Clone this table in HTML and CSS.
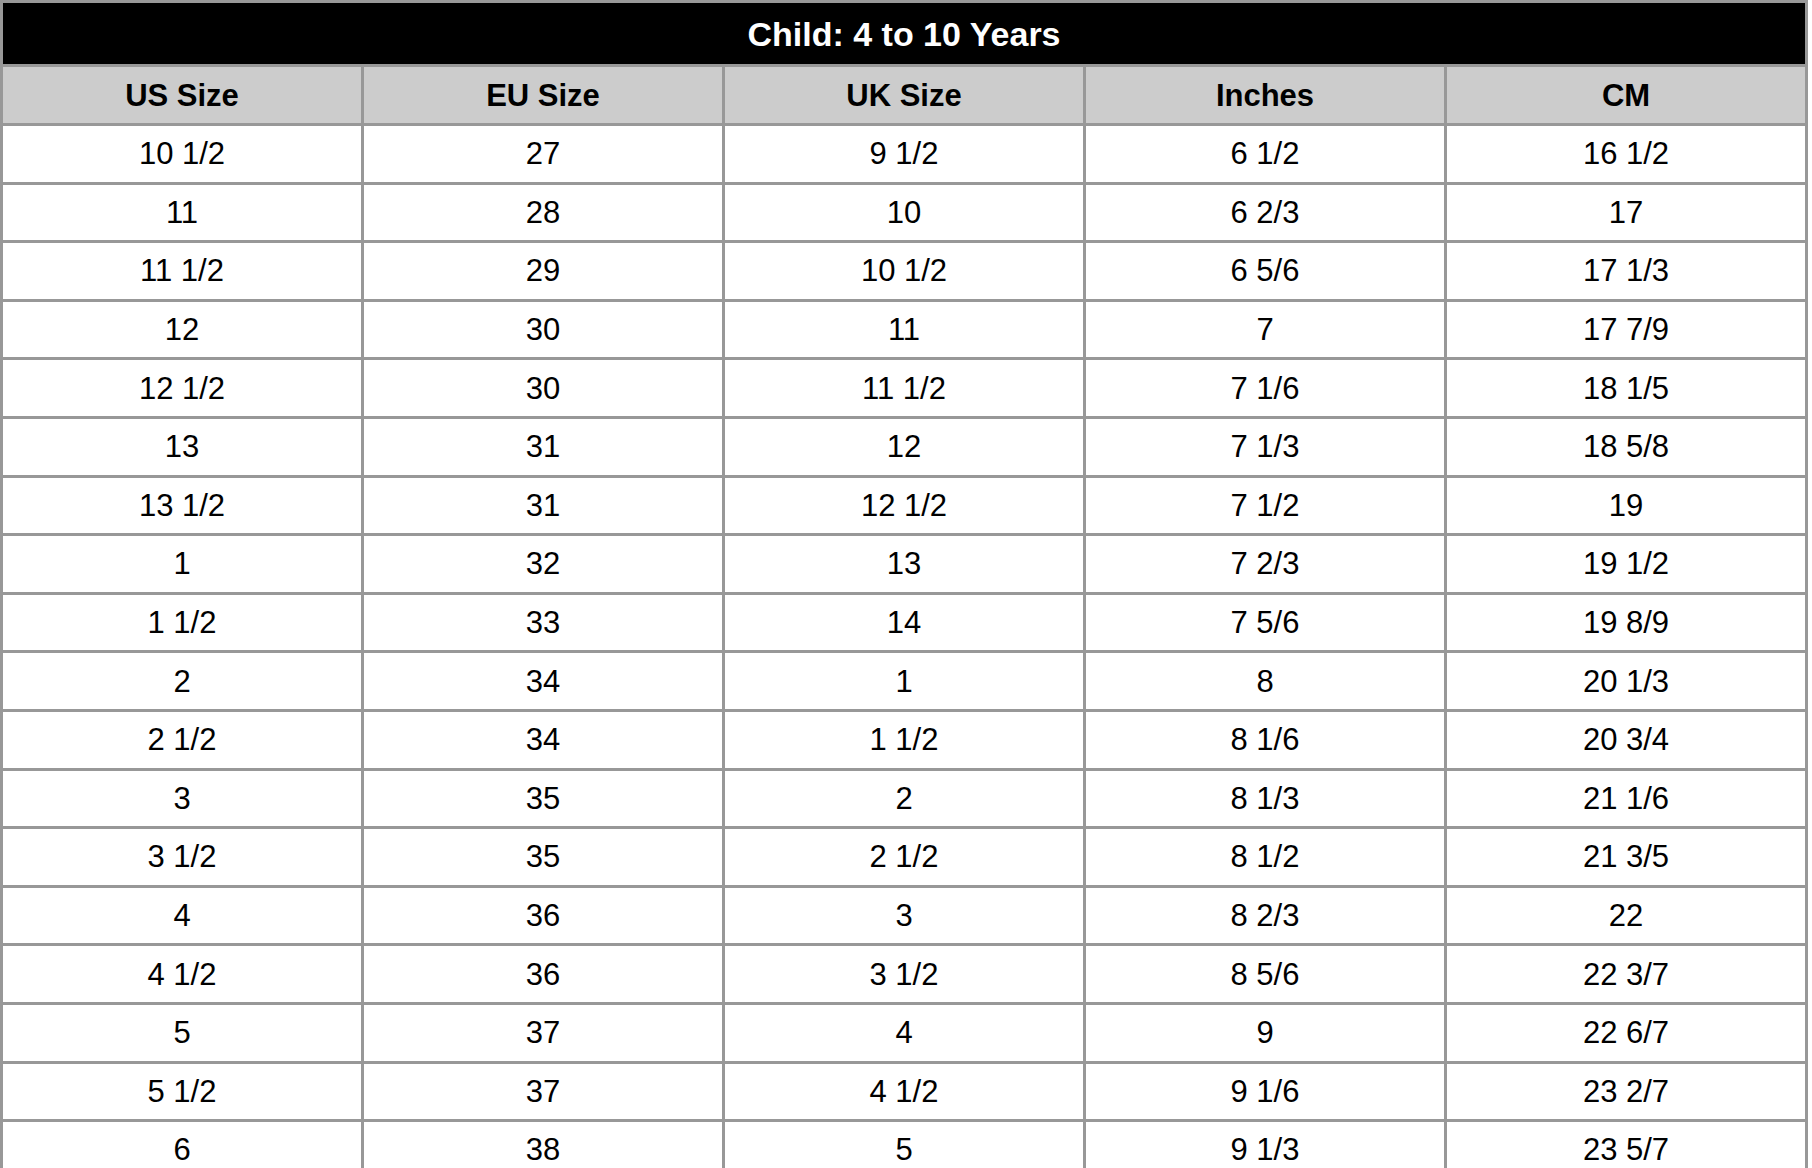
FILE: index.html
```html
<!DOCTYPE html>
<html>
<head>
<meta charset="utf-8">
<title>Child: 4 to 10 Years</title>
<link rel="stylesheet" href="styles.css">
</head>
<body>
<table class="size-chart">
  <thead>
    <tr class="title-row"><th colspan="5">Child: 4 to 10 Years</th></tr>
    <tr class="head-row"><th>US Size</th><th>EU Size</th><th>UK Size</th><th>Inches</th><th>CM</th></tr>
  </thead>
  <tbody>
    <tr><td>10 1/2</td><td>27</td><td>9 1/2</td><td>6 1/2</td><td>16 1/2</td></tr>
    <tr><td>11</td><td>28</td><td>10</td><td>6 2/3</td><td>17</td></tr>
    <tr><td>11 1/2</td><td>29</td><td>10 1/2</td><td>6 5/6</td><td>17 1/3</td></tr>
    <tr><td>12</td><td>30</td><td>11</td><td>7</td><td>17 7/9</td></tr>
    <tr><td>12 1/2</td><td>30</td><td>11 1/2</td><td>7 1/6</td><td>18 1/5</td></tr>
    <tr><td>13</td><td>31</td><td>12</td><td>7 1/3</td><td>18 5/8</td></tr>
    <tr><td>13 1/2</td><td>31</td><td>12 1/2</td><td>7 1/2</td><td>19</td></tr>
    <tr><td>1</td><td>32</td><td>13</td><td>7 2/3</td><td>19 1/2</td></tr>
    <tr><td>1 1/2</td><td>33</td><td>14</td><td>7 5/6</td><td>19 8/9</td></tr>
    <tr><td>2</td><td>34</td><td>1</td><td>8</td><td>20 1/3</td></tr>
    <tr><td>2 1/2</td><td>34</td><td>1 1/2</td><td>8 1/6</td><td>20 3/4</td></tr>
    <tr><td>3</td><td>35</td><td>2</td><td>8 1/3</td><td>21 1/6</td></tr>
    <tr><td>3 1/2</td><td>35</td><td>2 1/2</td><td>8 1/2</td><td>21 3/5</td></tr>
    <tr><td>4</td><td>36</td><td>3</td><td>8 2/3</td><td>22</td></tr>
    <tr><td>4 1/2</td><td>36</td><td>3 1/2</td><td>8 5/6</td><td>22 3/7</td></tr>
    <tr><td>5</td><td>37</td><td>4</td><td>9</td><td>22 6/7</td></tr>
    <tr><td>5 1/2</td><td>37</td><td>4 1/2</td><td>9 1/6</td><td>23 2/7</td></tr>
    <tr><td>6</td><td>38</td><td>5</td><td>9 1/3</td><td>23 5/7</td></tr>
  </tbody>
</table>
</body>
</html>
```

FILE: styles.css
```css
html, body {
  margin: 0;
  padding: 0;
  background: #ffffff;
  overflow: hidden;
}

.size-chart {
  width: 1808px;
  table-layout: fixed;
  border-collapse: separate;
  border-spacing: 3px;
  background: #989898;
  font-family: "Liberation Sans", Arial, sans-serif;
  color: #000000;
}

.size-chart th,
.size-chart td {
  padding: 0;
  text-align: center;
  vertical-align: middle;
  line-height: 1;
}

.title-row th {
  height: 61px;
  background: #000000;
  color: #ffffff;
  font-size: 34px;
  font-weight: bold;
}

.head-row th {
  height: 56px;
  background: #cccccc;
  font-size: 31px;
  font-weight: bold;
}

.size-chart td {
  height: 55.6px;
  background: #ffffff;
  font-size: 31px;
  font-weight: normal;
}
```
